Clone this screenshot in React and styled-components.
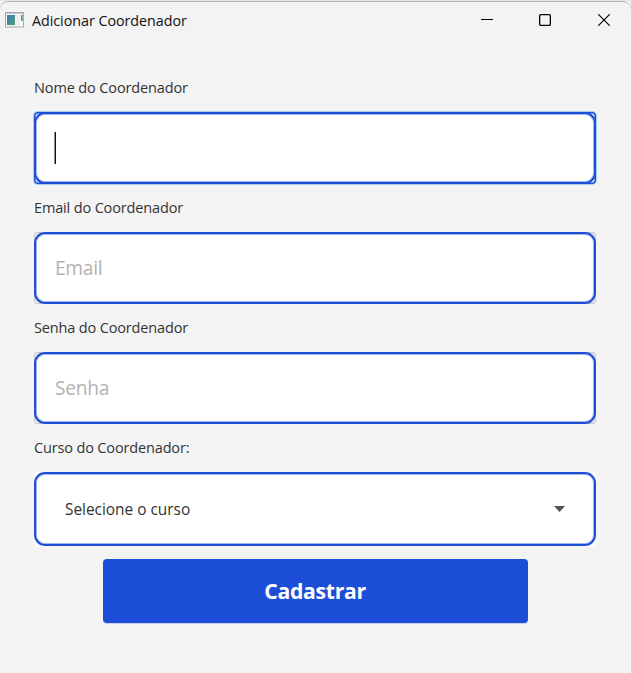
import React from "react";
import styled, { createGlobalStyle } from "styled-components";

const GlobalStyle = createGlobalStyle`
  * { box-sizing: border-box; }
  body { margin: 0; background: #f4f4f4; font-family: "Open Sans", "Noto Sans", sans-serif; }
`;

const Window = styled.div`
  width: 631px;
  height: 673px;
  overflow: hidden;
  background: #f4f4f4;
  border-top: 1px solid #e4e4e4;
`;

const TitleBar = styled.header`
  display: flex;
  align-items: center;
  height: 37px;
  padding-left: 5px;
  border-top: 1px solid #b4b4b4;
  border-radius: 8px 8px 0 0;
  background: #f3f3f3;
`;

const Title = styled.span`
  flex: 1;
  margin-left: 8px;
  padding-top: 2px;
  font-size: 14.3px;
  line-height: 20px;
  letter-spacing: ${(p) => p.$spacing};
  color: #111;
  white-space: nowrap;
`;

const WindowControls = styled.div`
  display: flex;
  margin-right: -3px;
`;

const ControlButton = styled.button`
  display: flex;
  align-items: center;
  justify-content: center;
  width: ${(p) => p.$width || "58px"};
  height: 36px;
  padding: 0;
  border: 0;
  background: none;
`;

const Form = styled.form`
  display: flex;
  flex-direction: column;
  padding: 26px 35px 0 34px;
`;

const Label = styled.label`
  height: 48px;
  font-size: 14.5px;
  line-height: 47px;
  letter-spacing: ${(p) => p.$spacing};
  color: #333;
  white-space: nowrap;
`;

const FieldFrame = styled.div`
  height: 72px;
  border-radius: 4px;
  background: ${(p) => (p.$focused ? "#e4eefb" : "#ececec")};
  box-shadow: ${(p) =>
    p.$focused
      ? "inset 0 0 0 1.5px #1d4ed8, 0 0 0 1px #a9cbec"
      : "inset 0 0 0 1px #c6c6c6"};
`;

const FieldBox = styled.div`
  display: flex;
  align-items: center;
  height: 100%;
  padding: 0 19px;
  border: 2px solid #1d4ed8;
  border-radius: 11px;
  background: #fff;
  box-shadow: inset 0 0 0 1px #a0b5f0;
`;

const Placeholder = styled.span`
  font-size: 19.2px;
  line-height: 28px;
  letter-spacing: ${(p) => p.$spacing};
  color: #b2b2b2;
`;

const Caret = styled.span`
  width: 2px;
  height: 32px;
  margin-left: -1px;
  border-left: 1px solid #909090;
  background: #111;
`;

const SelectFrame = styled.div`
  height: 75px;
  padding-bottom: 1px;
  border-radius: 4px;
  background: #fbfbfb;
`;

const SelectBox = styled(FieldBox)`
  justify-content: space-between;
  padding: 0 29px;
`;

const SelectText = styled.span`
  padding-top: 2px;
  font-size: 15.4px;
  line-height: 24px;
  letter-spacing: ${(p) => p.$spacing};
  color: #333;
`;

const Submit = styled.button`
  align-self: center;
  width: 425px;
  height: 64px;
  margin-top: 12px;
  padding: 0;
  border: 0;
  border-radius: 4px;
  background: #1d4ed8;
  box-shadow: 0 1px 0 #c3cff1;
  color: #fff;
  font: 700 21.2px/64px "Open Sans", "Noto Sans", sans-serif;
  letter-spacing: ${(p) => p.$spacing};
`;

const AppIcon = () => (
  <svg width="19" height="16" viewBox="0 0 19 16">
    <defs>
      <linearGradient id="pane" x1="0" y1="0" x2="1" y2="1">
        <stop offset="0" stopColor="#3f78a3" />
        <stop offset="1" stopColor="#4fa182" />
      </linearGradient>
    </defs>
    <rect x="0.5" y="0.5" width="18" height="14.5" fill="#f4f6f7" stroke="#a5a9b5" />
    <path d="M1 1.5h17" stroke="#c7cad5" />
    <rect x="2" y="3" width="8" height="10" fill="url(#pane)" />
    <path d="M12 3v10M14 3v10" stroke="#e6eaec" />
    <rect x="16" y="3" width="1.6" height="6" fill="url(#pane)" />
  </svg>
);

const MinimizeIcon = () => (
  <svg width="12" height="12" viewBox="0 0 12 12">
    <path d="M0 5.5h12" stroke="#000" />
  </svg>
);

const MaximizeIcon = () => (
  <svg width="12" height="12" viewBox="0 0 12 12">
    <rect x="0.65" y="0.65" width="10.7" height="10.7" rx="1.2" fill="none" stroke="#000" strokeWidth="1.3" />
  </svg>
);

const CloseIcon = () => (
  <svg width="12" height="12" viewBox="0 0 12 12">
    <path d="M0.3 0.3l11.4 11.4M11.7 0.3L0.3 11.7" stroke="#000" strokeWidth="1.15" />
  </svg>
);

const ArrowIcon = () => (
  <svg width="11" height="6" viewBox="0 0 11 6">
    <path d="M0 0h11L5.5 6z" fill="#555" />
  </svg>
);

export default function App() {
  return (
    <>
      <GlobalStyle />
      <Window>
        <TitleBar>
          <AppIcon />
          <Title $spacing="-0.03px">Adicionar Coordenador</Title>
          <WindowControls>
            <ControlButton aria-label="Minimizar"><MinimizeIcon /></ControlButton>
            <ControlButton aria-label="Maximizar"><MaximizeIcon /></ControlButton>
            <ControlButton aria-label="Fechar" $width="60px"><CloseIcon /></ControlButton>
          </WindowControls>
        </TitleBar>
        <Form>
          <Label $spacing="-0.13px">Nome do Coordenador</Label>
          <FieldFrame $focused>
            <FieldBox><Caret /></FieldBox>
          </FieldFrame>
          <Label $spacing="-0.15px">Email do Coordenador</Label>
          <FieldFrame>
            <FieldBox><Placeholder $spacing="-0.3px">Email</Placeholder></FieldBox>
          </FieldFrame>
          <Label $spacing="-0.15px">Senha do Coordenador</Label>
          <FieldFrame>
            <FieldBox><Placeholder $spacing="-0.3px">Senha</Placeholder></FieldBox>
          </FieldFrame>
          <Label $spacing="-0.15px">Curso do Coordenador:</Label>
          <SelectFrame>
            <SelectBox>
              <SelectText $spacing="0px">Selecione o curso</SelectText>
              <ArrowIcon />
            </SelectBox>
          </SelectFrame>
          <Submit type="button" $spacing="-0.3px">Cadastrar</Submit>
        </Form>
      </Window>
    </>
  );
}
